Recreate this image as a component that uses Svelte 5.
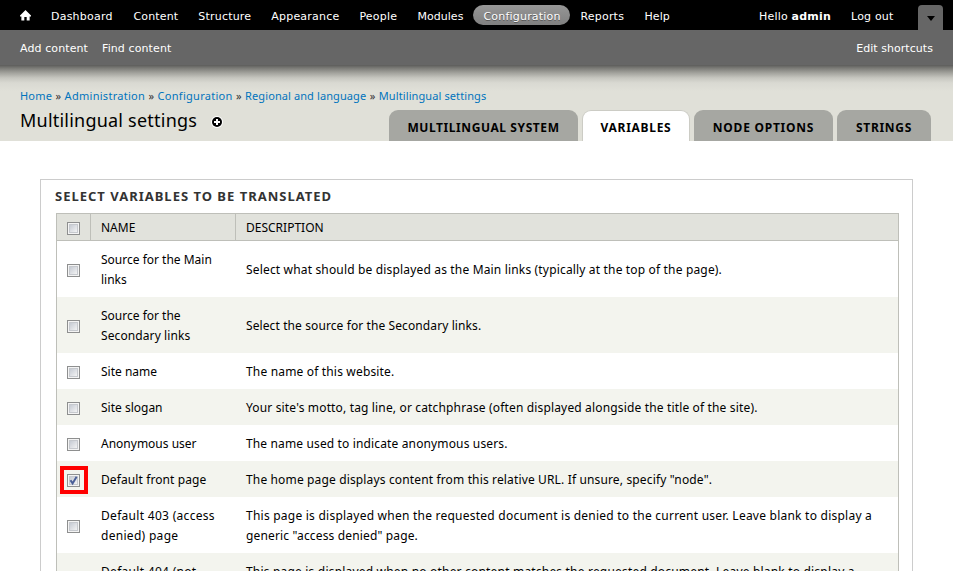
<script>
  const menu = [
    { label: 'Dashboard', w: 82.5, ls: 0.22 },
    { label: 'Content', w: 64.5, ls: 0.15 },
    { label: 'Structure', w: 73, ls: 0.2 },
    { label: 'Appearance', w: 88, ls: 0.2 },
    { label: 'People', w: 58, ls: 0.2 },
    { label: 'Modules', w: 56, ls: 0.05 },
    { label: 'Configuration', w: 97, ls: 0.2, active: true },
    { label: 'Reports', w: 64, ls: 0.2 },
    { label: 'Help', w: 45, ls: 0.1 }
  ];
  const crumbs = [
    { label: 'Home', ls: 0.2 },
    { label: 'Administration', ls: 0.28 },
    { label: 'Configuration', ls: 0.28 },
    { label: 'Regional and language', ls: 0.1 },
    { label: 'Multilingual settings', ls: 0.1 }
  ];
  const tabs = [
    { label: 'Multilingual system', w: 189, ls: 0.58 },
    { label: 'Variables', w: 108, ls: 0.7, active: true },
    { label: 'Node options', w: 139, ls: 0.75 },
    { label: 'Strings', w: 94, ls: 0.68 }
  ];
  const rows = [
    { name: [['Source for the Main', 0], ['links', 0]], desc: [['Select what should be displayed as the Main links (typically at the top of the page).', 0.165]] },
    { name: [['Source for the', 0], ['Secondary links', 0.1]], desc: [['Select the source for the Secondary links.', 0.1]] },
    { name: [['Site name', 0]], desc: [['The name of this website.', 0.17]] },
    { name: [['Site slogan', 0]], desc: [["Your site's motto, tag line, or catchphrase (often displayed alongside the title of the site).", 0.155]] },
    { name: [['Anonymous user', 0]], desc: [['The name used to indicate anonymous users.', 0.14]] },
    { name: [['Default front page', 0.1]], desc: [['The home page displays content from this relative URL. If unsure, specify "node".', 0.145]], checked: true },
    { name: [['Default 403 (access', 0.3], ['denied) page', 0.3]], desc: [['This page is displayed when the requested document is denied to the current user. Leave blank to display a', 0.235], ['generic "access denied" page.', 0.15]] },
    { name: [['Default 404 (not', 0.3], ['found) page', 0.3]], desc: [['This page is displayed when no other content matches the requested document. Leave blank to display a', 0.19], ['generic "page not found" page.', 0.15]] }
  ];
</script>

{#snippet checkbox(checked)}
  <span class="check" class:marked={checked}>
    <svg width="13" height="13" viewBox="0 0 13 13">
      <defs>
        <linearGradient id="box" x1="0" y1="0" x2="1" y2="1">
          <stop offset="0" stop-color="#c3c8d1" />
          <stop offset="1" stop-color="#f6f6f6" />
        </linearGradient>
      </defs>
      <rect x=".5" y=".5" width="12" height="12" fill="#f4f4f4" stroke="#8e8f8f" />
      <rect x="2.5" y="2.5" width="8" height="8" fill="url(#box)" stroke="#c6c9ce" />
      {#if checked}
        <path d="M3.5 6.2 5.6 9.4 9.6 2.8" fill="none" stroke="#4a5f97" stroke-width="2" />
      {/if}
    </svg>
  </span>
{/snippet}

<div class="page">
  <nav class="toolbar">
    <a class="home" href="#home" aria-label="Home">
      <svg width="11" height="11" viewBox="0 0 12 12"><path d="M6 0 12 6V7H10.5V11.5H7.3V7.5H4.7V11.5H1.5V7H0V6Z" fill="#fff" /></svg>
    </a>
    {#each menu as m}
      <a href="#menu" class:active={m.active} style="min-width:{m.w}px;letter-spacing:{m.ls}px">{m.label}</a>
    {/each}
    <span class="hello">Hello <b>admin</b></span>
    <a class="logout" href="#logout">Log out</a>
    <span class="toggle"><i></i></span>
  </nav>
  <div class="drawer">
    <a href="#add">Add content</a>
    <a href="#find">Find content</a>
    <a class="edit" href="#edit">Edit shortcuts</a>
  </div>
  <header>
    <div class="crumbs">
      {#each crumbs as c, i}
        {#if i}<span>»</span>{/if}<a href="#crumb" style="letter-spacing:{c.ls}px">{c.label}</a>
      {/each}
    </div>
    <div class="titlebar">
      <h1>Multilingual settings</h1>
      <svg class="plus" width="12" height="12" viewBox="0 0 12 12">
        <circle cx="6" cy="6" r="6" fill="#fff" />
        <circle cx="6" cy="6" r="5" fill="#000" />
        <path d="M6 3V9M3 6H9" stroke="#fff" stroke-width="2" />
      </svg>
      <div class="tabs">
        {#each tabs as t}
          <a href="#tab" class:active={t.active} style="width:{t.w}px;letter-spacing:{t.ls}px">{t.label}</a>
        {/each}
      </div>
    </div>
  </header>
  <main>
    <h2>Select variables to be translated</h2>
    <div class="table">
      <div class="row head">
        <div class="c1">{@render checkbox(false)}</div>
        <div class="c2"><p>NAME</p></div>
        <div class="c3"><p>DESCRIPTION</p></div>
      </div>
      {#each rows as r, i}
        <div class="row" class:even={i % 2 === 1}>
          <div class="c1">{@render checkbox(r.checked)}</div>
          <div class="c2">{#each r.name as [line, ls]}<p style="letter-spacing:{ls}px">{line}</p>{/each}</div>
          <div class="c3">{#each r.desc as [line, ls]}<p style="letter-spacing:{ls}px">{line}</p>{/each}</div>
        </div>
      {/each}
    </div>
  </main>
</div>

<style>
  :global(body) { margin: 0; background: #fff; }
  * { box-sizing: border-box; }
  a { text-decoration: none; color: inherit; }
  p, h1, h2 { margin: 0; }
  .page {
    height: 571px;
    overflow: hidden;
    font: 12px/20px "Noto Sans", "Open Sans", sans-serif;
    color: #000;
  }
  .toolbar {
    display: flex;
    height: 30px;
    padding: 5px 10px 0 20px;
    background: #000;
    color: #fff;
    font: 11px/23px "DejaVu Sans", sans-serif;
    white-space: nowrap;
    letter-spacing: 0.2px;
  }
  .toolbar a { flex: none; height: 20px; padding-left: 10px; border-radius: 10px; }
  .toolbar a:not(.home, .active, .logout) { padding-right: 10px; }
  .toolbar .home { width: 21px; padding: 5px 0 0; line-height: 0; border-radius: 0; }
  .toolbar a.active { background: linear-gradient(#969696, #808080); text-shadow: 0 1px 0 #555; }
  .toolbar .hello { margin-left: auto; width: 82px; }
  .toolbar .logout { width: 77px; }
  .toggle {
    display: flex;
    justify-content: center;
    width: 25px;
    height: 25px;
    padding-top: 11px;
    background: #666;
    border-radius: 4px 4px 0 0;
  }
  .toggle i { width: 0; height: 0; border: 4px solid transparent; border-top: 5px solid #000; border-bottom: 0; }
  .drawer {
    display: flex;
    height: 35px;
    padding: 0 20px;
    gap: 14px;
    background: #666;
    color: #fff;
    font: 11px/38px "DejaVu Sans", sans-serif;
    letter-spacing: 0.1px;
  }
  .edit { margin-left: auto; letter-spacing: 0.05px; }
  header {
    height: 76px;
    padding: 21px 22px 0 20px;
    background: linear-gradient(#5c5c5a, #7a7a76 3px, #a3a39d 8px, #c7c7c0 13px, #d9d9d2 18px, #e0e0d8 26px);
  }
  .crumbs { display: flex; height: 20px; font-size: 11px; white-space: nowrap; color: #333; }
  .crumbs a { color: #0074bd; }
  .crumbs span { width: 12.5px; text-align: center; }
  .titlebar { display: flex; height: 35px; }
  h1 { width: 191px; font-size: 18px; font-weight: 400; line-height: 29px; letter-spacing: 0.22px; white-space: nowrap; }
  .plus { margin-top: 10px; }
  .tabs { display: flex; gap: 4px; margin: 4px 0 0 auto; }
  .tabs a {
    height: 31px;
    border-radius: 9px 9px 0 0;
    background: #a6a7a2;
    font-weight: 700;
    line-height: 35px;
    text-align: center;
    text-transform: uppercase;
    white-space: nowrap;
  }
  .tabs a.active { background: #fff; border: 1px solid #ccccc5; border-bottom: 0; line-height: 33px; }
  main { margin: 38px 40px 0; height: 500px; padding: 6px 14px 0; border: 1px solid #ccc; }
  h2 { height: 27px; font-size: 13px; line-height: 20px; font-weight: 700; color: #333; letter-spacing: 1px; text-transform: uppercase; white-space: nowrap; }
  .table { margin: 0 -1px 0 1px; width: 843px; border: 1px solid #bebfb9; }
  .row { display: flex; }
  .row.even { background: #f3f4ee; }
  .row > div { display: flex; flex-direction: column; justify-content: center; padding: 9px 10px 7px; white-space: nowrap; }
  .row .c1 { width: 34px; padding: 9px 10px 7px; border-right: 1px solid transparent; }
  .row .c2 { width: 145px; border-right: 1px solid transparent; }
  .row .c3 { flex: 1; }
  .row.head { height: 27px; background: #e1e2dc; border-bottom: 1px solid #bebfb9; }
  .row.head > div { border-color: #bebfb9; padding: 2px 10px 0; }
  .check { position: relative; display: block; width: 13px; height: 13px; }
  .check svg { display: block; }
  .row .check { top: 0.5px; }
  .row.head .check { top: 0; }
  .marked::after { content: ""; position: absolute; inset: -8px -8px -7px -7px; border: 4px solid #f00; }
</style>
